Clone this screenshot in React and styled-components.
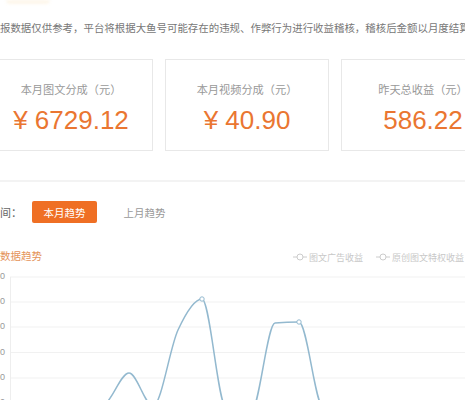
import React from "react";
import styled, { createGlobalStyle } from "styled-components";

const GlobalStyle = createGlobalStyle`
  html, body { margin: 0; padding: 0; background: #fff; }
  body { font-family: "Noto Sans CJK SC", sans-serif; overflow: hidden; }
`;

const Page = styled.div`
  width: 465px;
  height: 400px;
  overflow: hidden;
  background: #fff;
`;

const TopGlow = styled.div`
  width: 44px;
  height: 4px;
  margin-left: 6px;
  background: #fdf1dc;
  border-radius: 0 0 6px 6px;
  filter: blur(1.5px);
  opacity: 0.6;
`;

const Notice = styled.p`
  margin: 17px 0 0;
  font-size: 10.45px;
  line-height: 14px;
  color: #777;
  white-space: nowrap;
`;

const CardRow = styled.div`
  display: flex;
  gap: 12px;
  margin: 24px 0 0 -11px;
`;

const Card = styled.div`
  flex: 0 0 164px;
  height: 92px;
  box-sizing: border-box;
  border: 1px solid #e8e8e8;
  display: flex;
  flex-direction: column;
  align-items: center;
  padding-top: 21px;
`;

const CardLabel = styled.div`
  font-size: 11.2px;
  line-height: 16px;
  color: #999;
  white-space: nowrap;
`;

const CardValue = styled.div`
  margin-top: 8px;
  font-family: "Liberation Sans", "Noto Sans CJK SC", sans-serif;
  font-size: 26px;
  line-height: 30px;
  color: #ea7631;
  white-space: nowrap;
`;

const Divider = styled.hr`
  margin: 29px 0 0;
  border: 0;
  height: 2px;
  background: #f3f3f3;
`;

const FilterRow = styled.div`
  display: flex;
  align-items: center;
  gap: 15px;
  height: 22px;
  margin-top: 19px;
`;

const FilterLabel = styled.span`
  width: 17px;
  font-size: 11px;
  color: #666;
  white-space: nowrap;
`;

const TrendButton = styled.button`
  width: 65px;
  height: 22px;
  padding: 0;
  border: 0;
  border-radius: 2px;
  font-family: "Noto Sans CJK SC", sans-serif;
  font-size: 10.5px;
  background: ${(p) => (p.$active ? "#ef6f24" : "transparent")};
  color: ${(p) => (p.$active ? "#fff" : "#999")};
`;

const ChartHeader = styled.div`
  display: flex;
  align-items: center;
  height: 16px;
  margin-top: 24px;
  white-space: nowrap;
`;

const ChartTitle = styled.div`
  flex: 0 0 293px;
  font-size: 10.5px;
  color: #e4935a;
`;

const Legend = styled.div`
  flex: none;
  display: flex;
  align-items: center;
  gap: 13px;
  margin-top: 4px;
`;

const LegendItem = styled.div`
  display: flex;
  align-items: center;
  gap: 2px;
  font-size: 9px;
  color: #c8c8c8;
`;

const ChartSvg = styled.svg`
  display: block;
`;

const SVG_TOP = 263;

const points = [
  [32, 412], [56, 412], [80, 412], [105, 404], [129, 373], [153, 406],
  [178, 330], [202, 299], [226, 408], [251, 412], [275, 323], [299, 322],
  [323, 408], [348, 414], [372, 414], [396, 414], [420, 414], [445, 414],
].map(([x, y]) => [x, y - SVG_TOP]);

function monotonePath(pts) {
  const n = pts.length;
  const t = new Array(n).fill(0);
  const sign = (v) => (v < 0 ? -1 : v > 0 ? 1 : 0);
  for (let i = 1; i < n - 1; i++) {
    const [x0, y0] = pts[i - 1];
    const [x1, y1] = pts[i];
    const [x2, y2] = pts[i + 1];
    const h0 = x1 - x0, h1 = x2 - x1;
    const s0 = (y1 - y0) / h0, s1 = (y2 - y1) / h1;
    const p = (s0 * h1 + s1 * h0) / (h0 + h1);
    t[i] = (sign(s0) + sign(s1)) * Math.min(Math.abs(s0), Math.abs(s1), 0.5 * Math.abs(p)) || 0;
  }
  t[0] = (3 * (pts[1][1] - pts[0][1]) / (pts[1][0] - pts[0][0]) - t[1]) / 2;
  t[n - 1] = (3 * (pts[n - 1][1] - pts[n - 2][1]) / (pts[n - 1][0] - pts[n - 2][0]) - t[n - 2]) / 2;
  let d = `M${pts[0][0]},${pts[0][1]}`;
  for (let i = 0; i < n - 1; i++) {
    const [x0, y0] = pts[i];
    const [x1, y1] = pts[i + 1];
    const dx = (x1 - x0) / 3;
    d += ` C${x0 + dx},${y0 + dx * t[i]} ${x1 - dx},${y1 - dx * t[i + 1]} ${x1},${y1}`;
  }
  return d;
}

const gridYs = [277, 302, 327, 352.5, 378, 403].map((y) => y - SVG_TOP);
const gridLabels = ["500", "400", "300", "200", "100", "0"];

function LegendIcon() {
  return (
    <svg width="14" height="8" viewBox="0 0 14 8">
      <line x1="0" y1="4" x2="14" y2="4" stroke="#ccc" strokeWidth="1" />
      <circle cx="7" cy="4" r="3" fill="#fff" stroke="#ccc" strokeWidth="1" />
    </svg>
  );
}

const cards = [
  { label: "本月图文分成（元）", value: "¥ 6729.12" },
  { label: "本月视频分成（元）", value: "¥ 40.90" },
  { label: "昨天总收益（元）", value: "586.22" },
];

export default function App() {
  const path = monotonePath(points);
  return (
    <Page>
      <GlobalStyle />
      <TopGlow />
      <Notice>
        报数据仅供参考，平台将根据大鱼号可能存在的违规、作弊行为进行收益稽核，稽核后金额以月度结算为准
      </Notice>
      <CardRow>
        {cards.map((c) => (
          <Card key={c.label}>
            <CardLabel>{c.label}</CardLabel>
            <CardValue>{c.value}</CardValue>
          </Card>
        ))}
      </CardRow>
      <Divider />
      <FilterRow>
        <FilterLabel>间：</FilterLabel>
        <TrendButton $active>本月趋势</TrendButton>
        <TrendButton>上月趋势</TrendButton>
      </FilterRow>
      <ChartHeader>
        <ChartTitle>数据趋势</ChartTitle>
        <Legend>
          <LegendItem>
            <LegendIcon />
            图文广告收益
          </LegendItem>
          <LegendItem>
            <LegendIcon />
            原创图文特权收益
          </LegendItem>
        </Legend>
      </ChartHeader>
      <ChartSvg width="465" height="160" viewBox="0 0 465 160">
        {gridYs.map((y, i) => (
          <g key={y}>
            <line x1="10" y1={y} x2="465" y2={y} stroke="#f1f1f1" strokeWidth="1" />
            <text
              x="5"
              y={y}
              textAnchor="end"
              dominantBaseline="middle"
              fontFamily="Liberation Sans, sans-serif"
              fontSize="9"
              fill="#999"
            >
              {gridLabels[i]}
            </text>
          </g>
        ))}
        <line x1="10.5" y1={gridYs[0]} x2="10.5" y2="160" stroke="#eee" strokeWidth="1" />
        <path d={path} fill="none" stroke="#93b9cf" strokeWidth="1.5" />
        <circle cx="202" cy={299 - SVG_TOP} r="2.2" fill="#fff" stroke="#93b9cf" strokeWidth="1" />
        <circle cx="299" cy={322 - SVG_TOP} r="2.2" fill="#fff" stroke="#93b9cf" strokeWidth="1" />
      </ChartSvg>
    </Page>
  );
}
